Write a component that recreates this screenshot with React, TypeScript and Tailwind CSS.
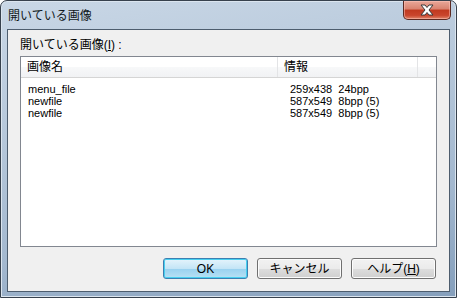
import React from "react";

const font = { fontFamily: '"Liberation Sans","Noto Sans CJK JP",sans-serif' };

function Btn({ children, def }: { children: React.ReactNode; def?: boolean }) {
  return (
    <div
      className={
        "w-[85px] h-[21px] rounded-[3px] border flex items-center justify-center text-[12px] text-black " +
        (def
          ? "border-[#3c7fb1] bg-[linear-gradient(#e5f4fc_0%,#c4e5f6_50%,#98d1ef_51%,#b7e1f5_100%)] shadow-[inset_0_0_0_1px_#48d0f0]"
          : "border-[#707070] bg-[linear-gradient(#f2f2f2_0%,#ebebeb_50%,#dddddd_51%,#cfcfcf_100%)] shadow-[inset_0_0_0_1px_#fcfcfc]")
      }
    >
      {children}
    </div>
  );
}

export default function App() {
  return (
    <div style={font} className="w-[457px] h-[298px] relative">
      <div className="w-[457px] h-[298px] rounded-t-[7px] border border-[#37414d] bg-[linear-gradient(170deg,#c9d7e6_0%,#b4c6d9_40%,#a3b8cf_70%,#859fbc_100%)] flex flex-col shadow-[inset_0_0_0_1px_#dbe5ef]">
        <div className="h-[28px] flex items-start pl-[7px] pt-[8px] text-[12px] leading-[14px] text-[#101820]">
          開いている画像
        </div>
        <div className="mx-[6px] mb-[5px] flex-1 border border-[#4d5d6e] bg-[#f0f0f0] flex flex-col px-[12px] pt-[7px] text-[12px] text-black">
          <div className="h-[16px] leading-[16px]">
            開いている画像(<span className="underline">I</span>) :
          </div>
          <div className="mt-[3px] h-[191px] border border-[#828790] bg-white flex flex-col">
            <div className="h-[21px] flex bg-[linear-gradient(#ffffff_0%,#ffffff_50%,#f7f8f9_51%,#f1f2f4_100%)] border-b border-[#d5d5d5] leading-[20px]">
              <div className="w-[257px] pl-[6px] border-r border-[#e3e4e6]">画像名</div>
              <div className="w-[140px] pl-[6px] border-r border-[#e3e4e6]">情報</div>
              <div className="flex-1" />
            </div>
            <div className="pt-[5px] flex flex-col text-[11px] leading-[12px]">
              {[
                ["menu_file", "259x438  24bpp"],
                ["newfile", "587x549  8bpp (5)"],
                ["newfile", "587x549  8bpp (5)"],
              ].map(([a, b], i) => (
                <div key={i} className="flex h-[12px]">
                  <div className="w-[269px] pl-[7px]">{a}</div>
                  <div className="whitespace-pre">{b}</div>
                </div>
              ))}
            </div>
          </div>
          <div className="mt-[11px] flex justify-end gap-[9px] pr-[1px]">
            <Btn def>OK</Btn>
            <Btn>キャンセル</Btn>
            <Btn>
              ヘルプ(<span className="underline">H</span>)
            </Btn>
          </div>
        </div>
      </div>
      <div className="absolute left-[403px] top-[1px] w-[48px] h-[19px] rounded-b-[5px] border border-[#5c2a22] border-t-0 bg-[linear-gradient(#e9a899_0%,#d9826f_45%,#c0391f_50%,#c9462d_80%,#e0866a_100%)] flex items-center justify-center shadow-[inset_0_0_0_1px_rgba(255,200,190,0.5)]">
        <svg width="18" height="12" viewBox="0 0 18 12">
          <path
            d="M3 1 H7 L9 3.5 L11 1 H15 L11 6 L15 11 H11 L9 8.5 L7 11 H3 L7 6 Z"
            fill="#ffffff"
            stroke="#3a3a3a"
            strokeWidth="1"
            strokeLinejoin="round"
          />
        </svg>
      </div>
    </div>
  );
}
